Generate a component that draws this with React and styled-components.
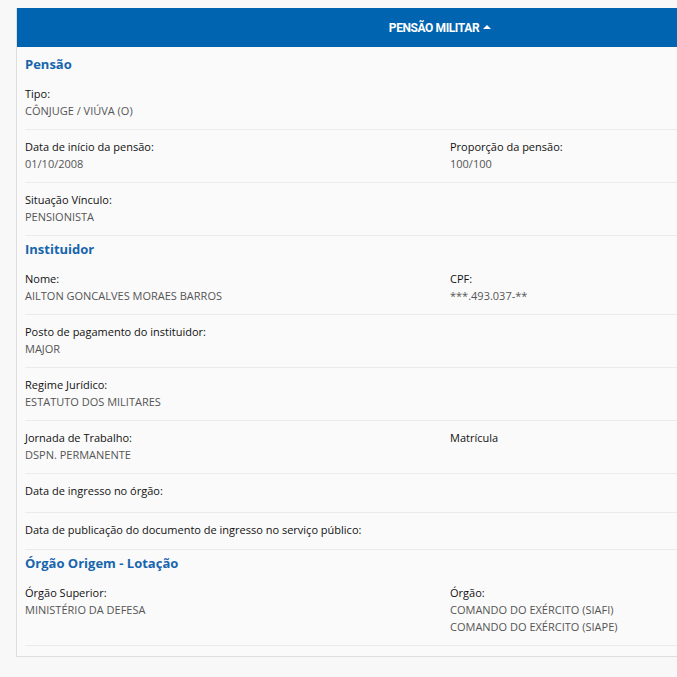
import styled, { createGlobalStyle } from "styled-components";

const GlobalStyle = createGlobalStyle`
  html, body {
    margin: 0;
    padding: 0;
    background: #f8f8f8;
    overflow: hidden;
  }
  body {
    font-family: "Open Sans", "Liberation Sans", sans-serif;
  }
`;

const Page = styled.div`
  padding: 8px 0 0 16px;
  width: 900px;
`;

const Panel = styled.section`
  width: 846px;
  background: #fafafa;
  border: 1px solid #dedede;
  border-top: none;
`;

const PanelHeader = styled.header`
  height: 39px;
  background: #0064b1;
  color: #fff;
  display: flex;
  align-items: center;
  justify-content: center;
  gap: 4px;
  font-family: "Roboto", "Liberation Sans", sans-serif;
  font-weight: 700;
  font-size: 12px;
  letter-spacing: -0.4px;
`;

const Caret = styled.span`
  width: 0;
  height: 0;
  border-left: 4px solid transparent;
  border-right: 4px solid transparent;
  border-bottom: 4px solid #fff;
  margin-top: -1px;
`;

const PanelBody = styled.div`
  padding: 4px 8px 10px;
`;

const SectionTitle = styled.h3`
  margin: 0 0 4px;
  padding-top: 4px;
  font-size: 13px;
  line-height: 18px;
  font-weight: 700;
  color: #1765ad;
`;

const Row = styled.div`
  display: grid;
  grid-template-columns: 425px 1fr;
  padding: 8px 0 ${(p) => (p.$tight ? "11px" : "10px")};
  border-bottom: 1px solid #ebebeb;
`;

const Field = styled.div`
  display: flex;
  flex-direction: column;
  min-height: ${(p) => (p.$empty ? "19px" : "auto")};
`;

const Label = styled.span`
  font-size: 11px;
  line-height: 17px;
  color: #111;
`;

const Value = styled.span`
  font-size: 11px;
  line-height: 17px;
  color: #555;
`;

const sections = [
  {
    title: "Pensão",
    rows: [
      [{ label: "Tipo:", values: ["CÔNJUGE / VIÚVA (O)"] }],
      [
        { label: "Data de início da pensão:", values: ["01/10/2008"] },
        { label: "Proporção da pensão:", values: ["100/100"] },
      ],
      [{ label: "Situação Vínculo:", values: ["PENSIONISTA"] }],
    ],
  },
  {
    title: "Instituidor",
    rows: [
      [
        { label: "Nome:", values: ["AILTON GONCALVES MORAES BARROS"] },
        { label: "CPF:", values: ["***.493.037-**"] },
      ],
      [{ label: "Posto de pagamento do instituidor:", values: ["MAJOR"] }],
      [{ label: "Regime Jurídico:", values: ["ESTATUTO DOS MILITARES"] }],
      [
        { label: "Jornada de Trabalho:", values: ["DSPN. PERMANENTE"] },
        { label: "Matrícula", values: [] },
      ],
      [{ label: "Data de ingresso no órgão:", values: [], empty: true }],
      [
        {
          label:
            "Data de publicação do documento de ingresso no serviço público:",
          values: [],
        },
      ],
    ],
  },
  {
    title: "Órgão Origem - Lotação",
    rows: [
      [
        { label: "Órgão Superior:", values: ["MINISTÉRIO DA DEFESA"] },
        {
          label: "Órgão:",
          values: [
            "COMANDO DO EXÉRCITO (SIAFI)",
            "COMANDO DO EXÉRCITO (SIAPE)",
          ],
        },
      ],
    ],
  },
];

export default function App() {
  return (
    <>
      <GlobalStyle />
      <Page>
        <Panel>
          <PanelHeader>
            PENSÃO MILITAR <Caret />
          </PanelHeader>
          <PanelBody>
            {sections.map((section) => (
              <div key={section.title}>
                <SectionTitle>{section.title}</SectionTitle>
                {section.rows.map((row, i) => (
                  <Row key={i} $tight={row.every((f) => f.values.length === 0)}>
                    {row.map((field) => (
                      <Field key={field.label} $empty={field.empty}>
                        <Label>{field.label}</Label>
                        {field.values.map((v) => (
                          <Value key={v}>{v}</Value>
                        ))}
                      </Field>
                    ))}
                  </Row>
                ))}
              </div>
            ))}
          </PanelBody>
        </Panel>
      </Page>
    </>
  );
}
